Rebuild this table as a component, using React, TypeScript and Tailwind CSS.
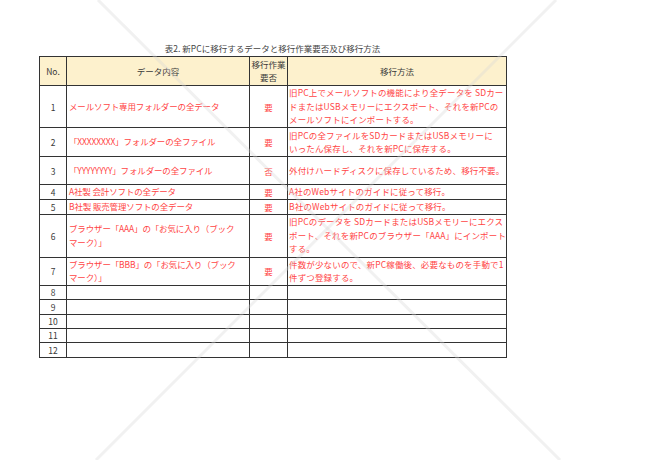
const rows = [
  {
    no: '1',
    h: 'h-[42px]',
    data: ['メールソフト専用フォルダーの全データ'],
    need: '要',
    method: ['旧PC上でメールソフトの機能により全データを SDカー', 'ドまたはUSBメモリーにエクスポート、それを新PCの', 'メールソフトにインポートする。'],
  },
  {
    no: '2',
    h: 'h-[29px]',
    data: ['「XXXXXXXX」フォルダーの全ファイル'],
    need: '要',
    method: ['旧PCの全ファイルをSDカードまたはUSBメモリーに', 'いったん保存し、それを新PCに保存する。'],
  },
  {
    no: '3',
    h: 'h-[28px]',
    data: ['「YYYYYYYY」フォルダーの全ファイル'],
    need: '否',
    method: ['外付けハードディスクに保存しているため、移行不要。'],
  },
  { no: '4', h: 'h-[15px]', data: ['A社製 会計ソフトの全データ'], need: '要', method: ['A社のWebサイトのガイドに従って移行。'] },
  { no: '5', h: 'h-[14px]', data: ['B社製 販売管理ソフトの全データ'], need: '要', method: ['B社のWebサイトのガイドに従って移行。'] },
  {
    no: '6',
    h: 'h-[43px]',
    data: ['ブラウザー「AAA」の「お気に入り（ブック', 'マーク）」'],
    need: '要',
    method: ['旧PCのデータを SDカードまたはUSBメモリーにエクス', 'ポート、それを新PCのブラウザー「AAA」にインポート', 'する。'],
  },
  {
    no: '7',
    h: 'h-[28px]',
    data: ['ブラウザー「BBB」の「お気に入り（ブック', 'マーク）」'],
    need: '要',
    method: ['件数が少ないので、新PC稼働後、必要なものを手動で1', '件ずつ登録する。'],
  },
  { no: '8', h: 'h-[14px]', data: [], need: '', method: [] },
  { no: '9', h: 'h-[15px]', data: [], need: '', method: [] },
  { no: '10', h: 'h-[14px]', data: [], need: '', method: [] },
  { no: '11', h: 'h-[14px]', data: [], need: '', method: [] },
  { no: '12', h: 'h-[15px]', data: [], need: '', method: [] },
];

function Lines({ items }: { items: string[] }) {
  return (
    <>
      {items.map((t, i) => (
        <div key={i} className="whitespace-nowrap leading-[13.5px]">
          {t}
        </div>
      ))}
    </>
  );
}

export default function App() {
  return (
    <div className="relative w-[650px] h-[460px] bg-white overflow-hidden font-['Noto_Sans_CJK_JP','Noto_Sans',sans-serif] text-[8.5px] leading-[12px] text-[#3a3a3a]">
      <div className="pt-[42px] pl-[39px] w-[506px]">
        <div className="text-center h-[14px] leading-[12px] text-[#444]">表2. 新PCに移行するデータと移行作業要否及び移行方法</div>
        <table className="border-collapse table-fixed w-[467px] border border-[#333]">
          <colgroup>
            <col className="w-[27px]" />
            <col className="w-[183px]" />
            <col className="w-[38px]" />
            <col className="w-[219px]" />
          </colgroup>
          <thead>
            <tr className="h-[29px] bg-[#fdf1cd]">
              <th className="border border-[#333] font-normal p-0 text-center">No.</th>
              <th className="border border-[#333] font-normal p-0 text-center">データ内容</th>
              <th className="border border-[#333] font-normal p-0 text-center leading-[13.5px]">
                移行作業
                <br />
                要否
              </th>
              <th className="border border-[#333] font-normal p-0 text-center">移行方法</th>
            </tr>
          </thead>
          <tbody>
            {rows.map((r) => (
              <tr key={r.no} className={r.h}>
                <td className="border border-[#333] p-0 text-center align-middle">{r.no}</td>
                <td className="border border-[#333] p-0 pl-[2px] align-middle text-[#ff4545] tracking-[-0.15px]">
                  <Lines items={r.data} />
                </td>
                <td className="border border-[#333] p-0 text-center align-middle text-[#ff4545]">{r.need}</td>
                <td className="border border-[#333] p-0 pl-[1px] align-middle text-[#ff4545] tracking-[0.15px]">
                  <Lines items={r.method} />
                </td>
              </tr>
            ))}
          </tbody>
        </table>
      </div>
      <svg className="absolute inset-0 pointer-events-none" width="650" height="460" viewBox="0 0 650 460">
        <line x1="98" y1="0" x2="560" y2="460" stroke="#d8d8d8" strokeOpacity="0.35" strokeWidth="3" />
        <line x1="556" y1="0" x2="96" y2="460" stroke="#d8d8d8" strokeOpacity="0.35" strokeWidth="3" />
      </svg>
    </div>
  );
}
